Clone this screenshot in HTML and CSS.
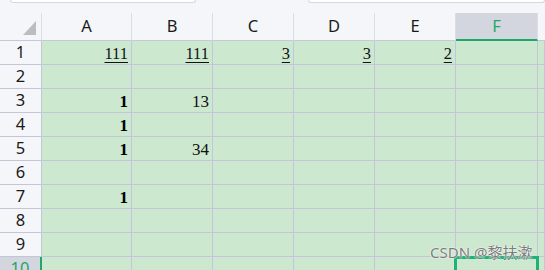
FILE: index.html
```html
<!DOCTYPE html>
<html lang="zh-CN">
<head>
    <meta charset="UTF-8">
    <title>Sheet</title>
    <link rel="stylesheet" href="styles.css">
</head>
<body>
    <div class="topbar">
        <div class="name-box"></div>
        <div class="formula-box"></div>
    </div>

    <div class="sheet">
        <div class="hd corner"><span class="tri"></span></div>
        <div class="hd">A</div>
        <div class="hd">B</div>
        <div class="hd">C</div>
        <div class="hd">D</div>
        <div class="hd">E</div>
        <div class="hd sel">F</div>
        <div class="hd last"></div>

        <div class="rh">1</div>
        <div class="c u">111</div>
        <div class="c u">111</div>
        <div class="c u">3</div>
        <div class="c u">3</div>
        <div class="c u">2</div>
        <div class="c"></div>
        <div class="c"></div>

        <div class="rh">2</div>
        <div class="c"></div><div class="c"></div><div class="c"></div><div class="c"></div><div class="c"></div><div class="c"></div><div class="c"></div>

        <div class="rh">3</div>
        <div class="c b">1</div>
        <div class="c">13</div>
        <div class="c"></div><div class="c"></div><div class="c"></div><div class="c"></div><div class="c"></div>

        <div class="rh">4</div>
        <div class="c b">1</div>
        <div class="c"></div><div class="c"></div><div class="c"></div><div class="c"></div><div class="c"></div><div class="c"></div>

        <div class="rh">5</div>
        <div class="c b">1</div>
        <div class="c">34</div>
        <div class="c"></div><div class="c"></div><div class="c"></div><div class="c"></div><div class="c"></div>

        <div class="rh">6</div>
        <div class="c"></div><div class="c"></div><div class="c"></div><div class="c"></div><div class="c"></div><div class="c"></div><div class="c"></div>

        <div class="rh">7</div>
        <div class="c b">1</div>
        <div class="c"></div><div class="c"></div><div class="c"></div><div class="c"></div><div class="c"></div><div class="c"></div>

        <div class="rh">8</div>
        <div class="c"></div><div class="c"></div><div class="c"></div><div class="c"></div><div class="c"></div><div class="c"></div><div class="c"></div>

        <div class="rh">9</div>
        <div class="c"></div><div class="c"></div><div class="c"></div><div class="c"></div><div class="c"></div><div class="c"></div><div class="c"></div>

        <div class="rh sel">10</div>
        <div class="c"></div><div class="c"></div><div class="c"></div><div class="c"></div><div class="c"></div>
        <div class="c active"></div>
        <div class="c"></div>
    </div>

    <div class="watermark">CSDN @黎扶漱</div>
</body>
</html>
```

FILE: styles.css
```css
body {
    margin: 0;
    background: #f5f6f9;
    font-family: "Noto Sans", sans-serif;
    overflow: hidden;
    position: relative;
    height: 270px;
}

.topbar {
    height: 13px;
    display: flex;
}

.name-box,
.formula-box {
    height: 2px;
    background: #fff;
    border: 1px solid #d6d8df;
    border-top: none;
    border-radius: 0 0 4px 4px;
}

.name-box {
    width: 184px;
    margin-left: 10px;
}

.formula-box {
    flex: 1;
    margin-left: 112px;
}

.sheet {
    display: grid;
    grid-template-columns: 42px 90px 81px 81px 81px 81px 82px 1fr;
    grid-template-rows: 28px;
    grid-auto-rows: 24px;
}

.sheet > div {
    box-sizing: border-box;
}

.hd {
    display: flex;
    align-items: center;
    justify-content: center;
    font-size: 16.5px;
    line-height: 1;
    color: #1a1a1a;
    border-right: 1px solid #dcdee6;
    border-bottom: 1px solid #c5c8d5;
}

.hd.last {
    border-right: none;
}

.hd.sel {
    background: #d3d6df;
    color: #1fa76a;
    border-bottom: 2px solid #1fa76a;
}

.corner {
    justify-content: flex-end;
    align-items: flex-end;
    padding: 0 5px 5px 0;
}

.tri {
    width: 13px;
    height: 14px;
    background: #bdbdbd;
    clip-path: polygon(100% 0, 100% 100%, 0 100%);
}

.rh {
    display: flex;
    align-items: center;
    justify-content: center;
    font-size: 16.5px;
    line-height: 1;
    color: #1a1a1a;
    border-right: 1px solid #c3c6d3;
    border-bottom: 1px solid #c3c6d3;
}

.rh.sel {
    background: #d3d6df;
    color: #1fa76a;
    border-right: 2px solid #1fa76a;
}

.c {
    background: #cce8cf;
    border-right: 1px solid #c5c4dd;
    border-bottom: 1px solid #c5c4dd;
    font-family: "Liberation Serif", serif;
    font-size: 17px;
    line-height: 20px;
    padding: 3px 3px 0 0;
    text-align: right;
    color: #111;
}

.c.u {
    font-size: 16.5px;
    text-decoration: underline;
    text-underline-offset: 3px;
}

.c.b {
    font-weight: bold;
    color: #000;
}

.c.active {
    position: relative;
}

.c.active::after {
    content: "";
    position: absolute;
    left: -2px;
    right: -2px;
    top: -1px;
    bottom: -2px;
    border: 3px solid #1fb277;
}

.watermark {
    position: absolute;
    left: 430px;
    top: 243px;
    font-family: "Noto Sans", "Noto Sans CJK SC", sans-serif;
    font-size: 15px;
    line-height: 18px;
    color: #7c7c7c;
    text-shadow: 0 0 1px #fff, 0 0 2px #fff;
}
```
